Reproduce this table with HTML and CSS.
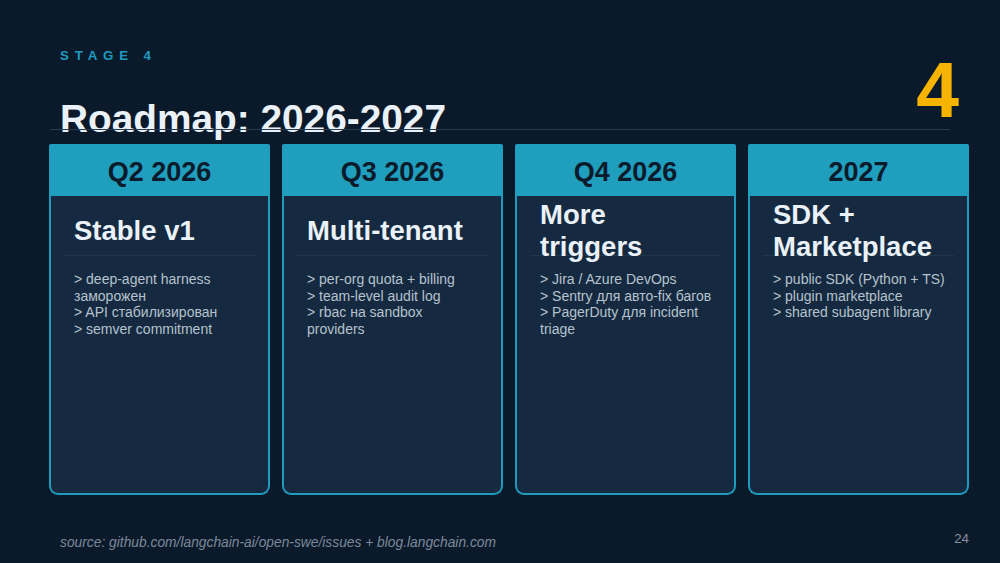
FILE: index.html
```html
<!DOCTYPE html>
<html lang="ru">
<head>
<meta charset="utf-8">
<title>Roadmap: 2026-2027</title>
<link rel="stylesheet" href="styles.css">
</head>
<body>
<div class="slide">
  <header class="top">
    <div class="head-left">
      <div class="stage">STAGE 4</div>
      <h1 class="title">Roadmap: 2026-2027</h1>
    </div>
    <div class="big-num">4</div>
  </header>

  <section class="cards">
    <div class="card">
      <div class="card-h">Q2 2026</div>
      <div class="card-b">
        <div class="ttl"><div class="ttl-t">Stable v1</div></div>
        <ul class="items">
          <li>&gt; deep-agent harness заморожен</li>
          <li>&gt; API стабилизирован</li>
          <li>&gt; semver commitment</li>
        </ul>
      </div>
    </div>
    <div class="card">
      <div class="card-h">Q3 2026</div>
      <div class="card-b">
        <div class="ttl"><div class="ttl-t">Multi-tenant</div></div>
        <ul class="items">
          <li>&gt; per-org quota + billing</li>
          <li>&gt; team-level audit log</li>
          <li>&gt; rbac на sandbox providers</li>
        </ul>
      </div>
    </div>
    <div class="card">
      <div class="card-h">Q4 2026</div>
      <div class="card-b">
        <div class="ttl"><div class="ttl-t">More triggers</div></div>
        <ul class="items">
          <li>&gt; Jira / Azure DevOps</li>
          <li>&gt; Sentry для авто-fix багов</li>
          <li>&gt; PagerDuty для incident triage</li>
        </ul>
      </div>
    </div>
    <div class="card">
      <div class="card-h">2027</div>
      <div class="card-b">
        <div class="ttl"><div class="ttl-t">SDK + Marketplace</div></div>
        <ul class="items">
          <li>&gt; public SDK (Python + TS)</li>
          <li>&gt; plugin marketplace</li>
          <li>&gt; shared subagent library</li>
        </ul>
      </div>
    </div>
  </section>

  <footer class="foot">
    <span class="source">source: github.com/langchain-ai/open-swe/issues + blog.langchain.com</span>
    <span class="page">24</span>
  </footer>
</div>
</body>
</html>
```

FILE: styles.css
```css
* { box-sizing: content-box; }
html, body {
  margin: 0;
  padding: 0;
  background: #0b1a2a;
}
body {
  font-family: "Liberation Sans", Arial, "Noto Sans", sans-serif;
  color: #e8f0f7;
}
.slide {
  width: 1000px;
  height: 563px;
  background: #0b1a2a;
  overflow: hidden;
}
.top {
  position: relative;
  margin: 0 50px;
  height: 129px;
  display: flex;
  justify-content: space-between;
  align-items: flex-start;
}
.top::after {
  content: "";
  position: absolute;
  left: 0;
  right: 0;
  bottom: -1px;
  height: 1px;
  background: #283c51;
}
.head-left {
  padding: 48px 0 0 10px;
}
.stage {
  font-size: 13.33px;
  line-height: 16px;
  font-weight: 700;
  letter-spacing: 5.8px;
  color: #1f9ac0;
}
.title {
  margin: 33px 0 0;
  font-size: 38.8px;
  line-height: 44px;
  font-weight: 700;
  color: #eaf1f8;
  white-space: nowrap;
}
.big-num {
  margin: 52px -9px 0 0;
  font-size: 77px;
  line-height: 77px;
  font-weight: 700;
  color: #f6b400;
}
.cards {
  display: flex;
  gap: 12px;
  margin: 15px 0 0 49px;
}
.card {
  width: 221px;
  height: 351px;
  display: flex;
  flex-direction: column;
}
.card-h {
  height: 48px;
  padding-top: 4px;
  display: flex;
  align-items: center;
  justify-content: center;
  background: #209ebe;
  border-radius: 2px 2px 0 0;
  font-size: 27px;
  font-weight: 700;
  color: #0c1b2b;
}
.card-b {
  flex: 1;
  background: #152a40;
  border: 2px solid #1f9bbd;
  border-top: none;
  border-radius: 0 0 9px 9px;
}
.ttl {
  margin: 11px 13px 0;
  height: 48px;
  padding: 0 12px 0 10px;
  border-bottom: 1px solid #203649;
  display: flex;
  align-items: center;
}
.ttl-t {
  width: 168px;
  font-size: 27.5px;
  line-height: 32.5px;
  font-weight: 700;
  color: #eaf1f8;
}
.items {
  list-style: none;
  margin: 15px 0 0;
  padding: 0 0 0 23px;
  width: 173px;
  font-size: 14px;
  line-height: 16.7px;
  color: #b6c2ce;
}
.items li { margin: 0; padding: 0; }
.foot {
  display: flex;
  justify-content: space-between;
  align-items: baseline;
  margin: 40px 31px 0 60px;
}
.source {
  font-size: 13.8px;
  font-style: italic;
  color: #7c899a;
}
.page {
  font-size: 13.33px;
  color: #8591a1;
  position: relative;
  top: -4px;
}
```
